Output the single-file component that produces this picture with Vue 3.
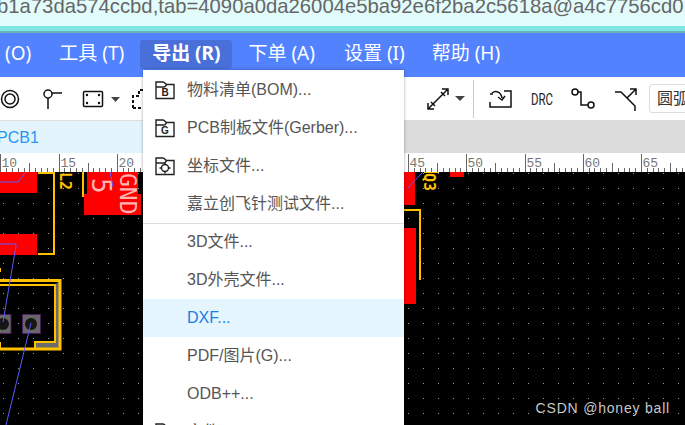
<template>
  <div class="app">
    <!-- Browser address strip -->
    <div class="url-bar">
      <span>b1a73da574ccbd,tab=4090a0da26004e5ba92e6f2ba2c5618a@a4c7756cd0</span>
    </div>
    <div class="teal-line"></div>

    <!-- Menu bar -->
    <nav class="menu-bar">
      <span
        v-for="item in menus"
        :key="item.label"
        class="menu-item"
        :class="{ active: item.active, first: item.first, tight: item.tight }"
      >{{ item.label }}</span>
    </nav>

    <!-- Toolbar -->
    <div class="toolbar">
      <div class="tools-left">
        <svg width="22" height="24" viewBox="0 0 22 24" class="icon">
          <circle cx="10" cy="12" r="8.5" />
          <circle cx="10" cy="12" r="5" />
        </svg>
        <svg width="30" height="26" viewBox="0 0 30 26" class="icon">
          <circle cx="12" cy="8" r="4" />
          <path d="M12 12V23M16 7H26" />
        </svg>
        <svg width="42" height="24" viewBox="0 0 42 24" class="icon">
          <rect x="3.5" y="4.5" width="19" height="15" rx="1" />
          <g class="fill">
            <circle cx="7" cy="8" r="1.2" />
            <circle cx="19" cy="8" r="1.2" />
            <circle cx="7" cy="16" r="1.2" />
            <circle cx="19" cy="16" r="1.2" />
          </g>
          <path class="caret" d="M31 10H40L35.500 15Z" />
        </svg>
        <svg width="14" height="24" viewBox="0 0 14 24" class="outline">
          <path
            d="M2 21V9H8V3H13M2 21H13"
            fill="none"
            stroke="#111"
            stroke-width="2"
            stroke-dasharray="3 2"
          />
        </svg>
      </div>
      <div class="tools-right">
        <svg width="41" height="26" viewBox="0 0 41 26" class="icon">
          <path d="M4 23L24 3M4 17V23H10M18 3H24V9M7 16L11 20M17 6L21 10" />
          <path class="caret" d="M31 10H41L36 15Z" />
        </svg>
        <div class="sep"></div>
        <svg width="36" height="24" viewBox="0 0 36 24" class="icon">
          <path d="M8 7H11M22 4H29V20H8V15" />
          <path d="M10 6C14 3 19 5 20 11M16 10L20 13L23 9" />
        </svg>
        <svg width="32" height="24" viewBox="0 0 32 24" class="drc">
          <text x="5" y="18" textLength="22" lengthAdjust="spacingAndGlyphs">DRC</text>
        </svg>
        <svg width="32" height="26" viewBox="0 0 32 26" class="icon">
          <circle cx="9" cy="6" r="3" />
          <circle cx="25" cy="19" r="3" />
          <path d="M12 6H15V19H22" />
        </svg>
        <svg width="35" height="28" viewBox="0 0 35 28" class="icon">
          <path d="M9 7H15L29 21V26M21 13L30 4M24 4H30V10" />
        </svg>
        <div class="select">圆弧</div>
      </div>
    </div>

    <!-- Document tabs -->
    <div class="tab-bar">
      <div class="tab-strip"><span class="tab">PCB1</span></div>
      <div class="tab-rest"></div>
    </div>

    <!-- Ruler and board canvas -->
    <svg class="canvas" width="685" height="272" viewBox="0 153 685 272">
      <defs>
        <pattern id="grid" x="3" y="8" width="15" height="15" patternUnits="userSpaceOnUse">
          <rect width="1" height="1" fill="#9a9a9a" />
        </pattern>
      </defs>

      <rect x="0" y="153" width="685" height="19" fill="#fff" />
      <rect x="0" y="172" width="685" height="253" fill="#000" />
      <rect x="0" y="172" width="685" height="253" fill="url(#grid)" />

      <g stroke="#666" stroke-width="1">
        <line
          v-for="t in ticks"
          :key="t.x"
          :x1="t.x"
          :x2="t.x"
          :y1="t.top"
          y2="172"
        />
      </g>
      <text
        v-for="l in labels"
        :key="l.text"
        :x="l.x + 1"
        y="167"
        class="ruler-label"
      >{{ l.text }}</text>

      <!-- pads -->
      <g fill="#ff0000">
        <rect x="0" y="172" width="37" height="21" />
        <rect x="0" y="234" width="37" height="21" />
        <rect x="87" y="172" width="51" height="23" />
        <rect x="84" y="194" width="57" height="21" />
        <rect x="404" y="172" width="11" height="33" />
        <rect x="450" y="172" width="14" height="5" />
        <rect x="404" y="228" width="12" height="76" />
      </g>

      <!-- silkscreen -->
      <g fill="none" stroke="#ffc000" stroke-width="2">
        <path d="M38 173H54V254H38" />
        <path d="M83 172V197" />
        <path d="M404 210H420V280" />
        <path d="M424 172.500H439" stroke-width="1" />
        <path d="M0 268V272" />
      </g>
      <text class="silk" transform="translate(60 172) rotate(90)">L2</text>
      <text class="silk" transform="translate(424 173) rotate(90)">Q3</text>
      <text class="net net-small" transform="translate(92 178) rotate(90)">5</text>
      <text class="net" transform="translate(120 173) rotate(90)">GND</text>

      <!-- connector footprint -->
      <path d="M55 285V342H35V348H60V280" fill="#6b6b6b" />
      <g fill="none" stroke="#ffc000" stroke-width="3">
        <path d="M0 280.500H60V349H0" />
      </g>
      <g fill="none" stroke="#ffc000" stroke-width="2">
        <path d="M0 285H55V342H35V349M0 342V349" />
      </g>
      <g fill="#666" stroke="#4b1a5b" stroke-width="1">
        <rect x="-8" y="314.500" width="19" height="19" />
        <rect x="22.500" y="314.500" width="18" height="19" />
      </g>
      <circle cx="3" cy="324" r="6" fill="#161616" />
      <circle cx="31" cy="324" r="6" fill="#161616" />

      <!-- ratlines -->
      <g fill="none" stroke="#5a5aff" stroke-width="1">
        <path d="M0 182H18L26 172" />
        <path d="M0 244H16V246L3 322" />
        <path d="M31 323L6 425" />
        <path d="M110 172L113 187" />
        <path d="M408 188L423 172" />
      </g>
      <text x="670" y="413" text-anchor="end" class="watermark">CSDN @honey ball</text>
    </svg>

    <!-- Open export menu -->
    <ul class="dropdown">
      <li
        v-for="row in rows"
        :key="row.label"
        class="row"
        :class="{ hover: row.hover, divided: row.divided }"
      >
        <span class="row-icon">
          <svg v-if="row.icon" width="20" height="20" viewBox="0 0 20 20">
            <path class="folder" d="M1 18.500V2H8C10 2 10 4.500 12 4.500H19V18.500ZM1 7H9C11 7 11 4.500 12 4.500" />
            <text v-if="row.icon !== 'target'" x="10" y="16" text-anchor="middle" class="folder-letter">{{ row.icon }}</text>
            <g v-else class="folder">
              <circle cx="10" cy="12" r="3.500" />
              <path d="M10 6.500V9M10 15V17.500M4.500 12H7M13 12H15.500" />
            </g>
          </svg>
        </span>
        <span class="row-text">{{ row.label }}</span>
      </li>
    </ul>
  </div>
</template>

<script setup>
const menus = [
  { label: '(O)', first: true },
  { label: '工具 (T)' },
  { label: '导出 (R)', active: true },
  { label: '下单 (A)' },
  { label: '设置 (I)', tight: true },
  { label: '帮助 (H)' }
]

const rows = [
  { label: '物料清单(BOM)...', icon: 'B' },
  { label: 'PCB制板文件(Gerber)...', icon: 'G' },
  { label: '坐标文件...', icon: 'target' },
  { label: '嘉立创飞针测试文件...' },
  { label: '3D文件...', divided: true },
  { label: '3D外壳文件...' },
  { label: 'DXF...', hover: true },
  { label: 'PDF/图片(G)...' },
  { label: 'ODB++...' },
  { label: '文件', icon: 'B' }
]

// one major tick per 5 units, ten subdivisions between them
const unit = 11.65
const origin = 408 - 45 * unit

const ticks = []
const labels = []
for (let i = 20; i <= 140; i++) {
  const v = i / 2
  const x = Math.round(origin + v * unit) + 0.5
  let top = 168
  if (i % 10 === 0) top = 154
  else if (i % 5 === 0) top = 163
  ticks.push({ x, top })
  if (i % 10 === 0) labels.push({ x, text: String(v) })
}
</script>

<style>
html,
body {
  margin: 0;
  overflow: hidden;
}
</style>

<style scoped>
.app {
  position: relative;
  width: 685px;
  height: 425px;
  overflow: hidden;
  display: flex;
  flex-direction: column;
  font-family: "Liberation Sans", "Noto Sans CJK SC", sans-serif;
}

.url-bar {
  height: 26px;
  background: #e2fbfb;
  color: #666;
  font-size: 20.3px;
  line-height: 12px;
  white-space: nowrap;
  overflow: hidden;
}

.url-bar span {
  margin-left: -3px;
  display: block;
}

.teal-line {
  height: 7px;
  background: linear-gradient(#7de6e2 0 5px, #6cb4bc 5px);
}

.menu-bar {
  height: 44px;
  flex: none;
  background: #5282fe;
  display: flex;
  align-items: center;
  gap: 3px;
  color: #fff;
  font-family: "Noto Sans", "Noto Sans CJK SC", sans-serif;
  font-size: 19px;
}

.menu-item {
  padding: 0 13px;
  height: 29px;
  line-height: 27px;
  margin-top: -1px;
  border-radius: 3px;
  white-space: nowrap;
}

.menu-item.first {
  padding: 0 12px 0 5px;
}

.menu-item.active {
  background: #4970d8;
  font-weight: 700;
  padding: 0 12px;
}

.menu-item.tight {
  padding-right: 11px;
}

.toolbar {
  height: 43px;
  flex: none;
  background: #fff;
  display: flex;
  align-items: center;
}

.tools-left {
  width: 424px;
  flex: none;
  display: flex;
  align-items: center;
  gap: 14px;
}

.tools-left .outline {
  display: block;
  flex: none;
  margin-left: -5px;
}

.tools-right {
  display: flex;
  align-items: center;
  gap: 8px;
  flex: none;
}

.icon {
  display: block;
  flex: none;
  fill: none;
  stroke: #111;
  stroke-width: 1.5;
}

.icon .fill {
  fill: #111;
  stroke: none;
}

.icon .caret {
  fill: #444;
  stroke: none;
}

.sep {
  width: 1px;
  height: 38px;
  background: #ccc;
}

.drc {
  display: block;
  flex: none;
}

.drc text {
  font-family: "Roboto", sans-serif;
  font-size: 16px;
  fill: #222;
}

.select {
  width: 70px;
  height: 29px;
  flex: none;
  box-sizing: border-box;
  border: 1px solid #ddd;
  border-radius: 3px;
  padding-left: 7px;
  line-height: 27px;
  font-size: 16px;
  color: #333;
}

.tab-bar {
  height: 33px;
  flex: none;
  display: flex;
  box-sizing: border-box;
  border-top: 1px solid #ddd;
}

.tab-strip {
  width: 300px;
  background: #e4f4fd;
  overflow: hidden;
}

.tab-rest {
  flex: 1;
  background: #dcdcdc;
}

.tab {
  display: block;
  margin-left: -3px;
  line-height: 33px;
  font-size: 16px;
  color: #2196f3;
}

.canvas {
  display: block;
  flex: none;
}

.ruler-label {
  font-family: "Liberation Mono", monospace;
  font-size: 13px;
  fill: #777;
}

.silk {
  font-family: "DejaVu Sans Mono", monospace;
  font-weight: 700;
  font-size: 15px;
  fill: #ffc000;
}

.net {
  font-family: "DejaVu Sans Mono", monospace;
  font-size: 23px;
  fill: #ffb4b4;
}

.net-small {
  font-size: 26px;
}

.watermark {
  font-family: "Liberation Sans", sans-serif;
  font-size: 14px;
  letter-spacing: 0.8px;
  fill: #c8c8c8;
}

.dropdown {
  position: absolute;
  left: 143px;
  top: 70px;
  width: 261px;
  margin: 0;
  padding: 1px 0 0;
  list-style: none;
  background: #fff;
  box-sizing: border-box;
  box-shadow: 0 0 3px rgba(0, 0, 0, 0.35);
}

.row {
  height: 38px;
  box-sizing: border-box;
  display: flex;
  align-items: center;
  gap: 13px;
  padding-left: 12px;
  font-size: 16px;
  line-height: 20px;
  color: #555;
  white-space: nowrap;
}

.row-text {
  margin-bottom: 1px;
}

.row.divided {
  border-top: 1px solid #ddd;
}

.row.hover {
  background: #e4f5fe;
  color: #1a7ee6;
}

.row-icon {
  width: 19px;
  height: 20px;
  flex: none;
}

.row-icon svg {
  display: block;
}

.folder {
  fill: none;
  stroke: #222;
  stroke-width: 1.4;
}

.folder-letter {
  font-family: "Liberation Sans", sans-serif;
  font-size: 10px;
  font-weight: 700;
  fill: #222;
}
</style>
